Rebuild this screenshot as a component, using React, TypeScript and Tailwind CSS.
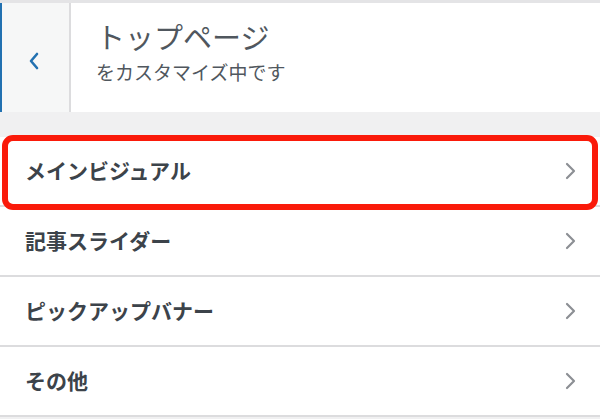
import React from "react";

const items = ["メインビジュアル", "記事スライダー", "ピックアップバナー", "その他"];

const Chevron = () => (
  <svg width="14" height="20" viewBox="0 0 14 20" fill="none">
    <path d="M3 3l7 7-7 7" stroke="#8c8f94" strokeWidth="2.2" strokeLinecap="round" strokeLinejoin="round" />
  </svg>
);

const App = () => {
  return (
    <div
      className="w-[600px] h-[419px] bg-[#f0f0f1] overflow-hidden"
      style={{ fontFamily: '"Noto Sans CJK JP", "Noto Sans", sans-serif' }}
    >
      {/* Header */}
      <div className="flex h-[112px] bg-white border-t-[3px] border-[#e4e4e6]">
        <div className="w-[2px] bg-[#2271b1]"></div>
        <button className="w-[69px] flex items-center justify-center bg-[#f6f7f7] border-r-2 border-[#dcdcde] pt-[6px] pr-[4px]">
          <svg width="14" height="18" viewBox="0 0 14 18" fill="none">
            <path d="M10 2L4 9l6 7" stroke="#2271b1" strokeWidth="2.6" strokeLinecap="round" strokeLinejoin="round" />
          </svg>
        </button>
        <div className="flex flex-col pl-[25px] pt-[12px]">
          <span className="text-[29px] leading-[42px] text-[#50575e]">トップページ</span>
          <span className="text-[19px] leading-[26px] text-[#50575e] mt-[2px]">をカスタマイズ中です</span>
        </div>
      </div>

      {/* Sections */}
      <div className="mt-[25px] flex flex-col">
        {items.map((label, i) => (
          <div
            key={label}
            className="relative h-[70px] bg-white border-b-2 border-[#dcdcde] flex items-center justify-between pl-[25px] pr-[22px]"
          >
            <span className="text-[21px] font-bold text-[#3c434a]">{label}</span>
            <Chevron />
            {i === 0 && (
              <div className="absolute z-10 left-[2px] right-[2px] -top-[2px] -bottom-[5px] border-[6px] border-[#fa1a0a] rounded-[11px]"></div>
            )}
          </div>
        ))}
      </div>
    </div>
  );
};

export default App;
